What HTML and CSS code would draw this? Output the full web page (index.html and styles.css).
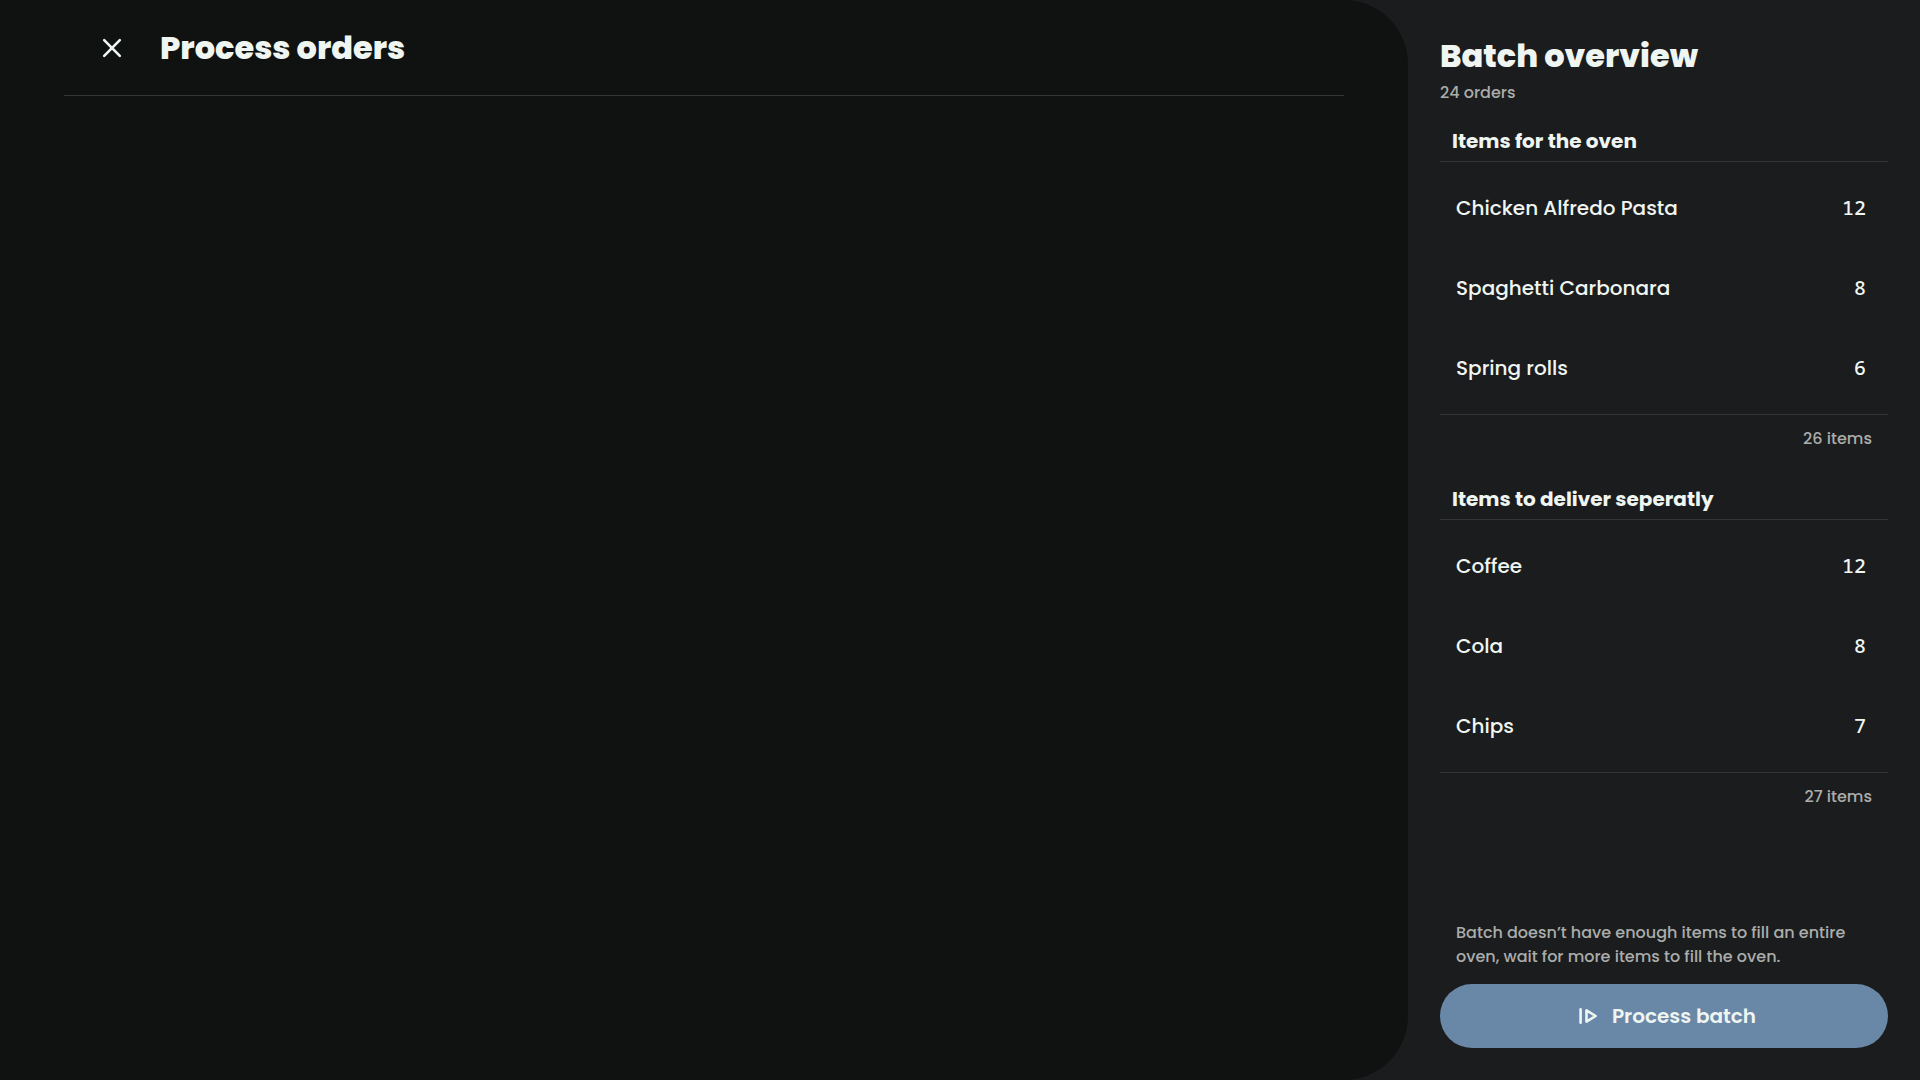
FILE: index.html
```html
<!DOCTYPE html>
<html lang="en">
<head>
  <meta charset="UTF-8">
  <meta name="viewport" content="width=device-width, initial-scale=1.0">
  <title>Process orders</title>
  <link rel="stylesheet" href="styles.css">
</head>
<body>
  <div class="layout">
    <main class="content">
      <header class="top-bar">
        <button class="close-btn" type="button" aria-label="Close">
          <svg width="32" height="32" viewBox="0 0 32 32" fill="none" stroke="currentColor" stroke-width="2.6" stroke-linecap="round">
            <path d="M8.2 8.2l15.6 15.6M23.8 8.2L8.2 23.8"/>
          </svg>
        </button>
        <h1>Process orders</h1>
      </header>
    </main>

    <aside class="sidebar">
      <h2>Batch overview</h2>
      <p class="order-count">24 orders</p>

      <div class="sections">
        <section>
          <table class="items">
            <caption>Items for the oven</caption>
            <tbody>
              <tr><td>Chicken Alfredo Pasta</td><td class="amount">12</td></tr>
              <tr><td>Spaghetti Carbonara</td><td class="amount">8</td></tr>
              <tr><td>Spring rolls</td><td class="amount">6</td></tr>
            </tbody>
          </table>
          <p class="total">26 items</p>
        </section>

        <section>
          <table class="items">
            <caption>Items to deliver seperatly</caption>
            <tbody>
              <tr><td>Coffee</td><td class="amount">12</td></tr>
              <tr><td>Cola</td><td class="amount">8</td></tr>
              <tr><td>Chips</td><td class="amount">7</td></tr>
            </tbody>
          </table>
          <p class="total">27 items</p>
        </section>
      </div>

      <div class="actions">
        <p class="note">Batch doesn’t have enough items to fill an entire oven, wait for more items to fill the oven.</p>
        <button class="process-btn" type="button">
          <svg width="32" height="32" viewBox="0 0 32 32" fill="none" stroke="currentColor" stroke-width="2.6" stroke-linecap="round" stroke-linejoin="round">
            <path d="M8.6 9.3v13.4"/>
            <path d="M14.5 10.4v11.2l9.2-5.6z"/>
          </svg>
          Process batch
        </button>
      </div>
    </aside>
  </div>
</body>
</html>
```
FILE: styles.css
```css
* {
  box-sizing: border-box;
  margin: 0;
  padding: 0;
}

body {
  font-family: Poppins, Inter, sans-serif;
  font-size: 20px;
  line-height: 30px;
  font-weight: 500;
  background: #1b1c1e;
  color: #eff5f1;
}

button {
  border: none;
  font: inherit;
  color: inherit;
  cursor: pointer;
}

.layout {
  display: flex;
  min-height: 100vh;
}

.content {
  flex: 1;
  padding: 0 64px;
  background: #101211;
  border-radius: 0 64px 64px 0;
}

.top-bar {
  display: flex;
  align-items: center;
  gap: 32px;
  height: 96px;
  padding-left: 32px;
  border-bottom: 1px solid #333535;
}

h1,
h2 {
  font-size: 32px;
  line-height: 48px;
  font-weight: 800;
}

.close-btn {
  display: flex;
  background: none;
}

.sidebar {
  display: flex;
  flex-direction: column;
  width: 512px;
  padding: 32px;
}

.order-count,
.total,
.note {
  font-size: 16px;
  line-height: 24px;
  color: #aaadab;
}

.order-count {
  padding-top: 1px;
}

.sections {
  display: flex;
  flex-direction: column;
  gap: 17px;
  margin-top: 15px;
}

.items {
  width: 100%;
  padding: 6px 0;
  border-top: 1px solid #333535;
  border-bottom: 1px solid #333535;
  border-spacing: 0;
}

.items caption {
  padding: 6px 12px 5px;
  font-weight: 700;
  text-align: left;
}

.items td {
  height: 80px;
  padding: 0 16px;
}

.items .amount {
  padding-right: 22px;
  font-family: "Noto Sans Mono", "DejaVu Sans Mono", monospace;
  text-align: right;
}

.total {
  padding: 12px 16px 10px;
  text-align: right;
}

.actions {
  margin-top: auto;
}

.note {
  padding: 0 16px;
  margin-bottom: 15px;
}

.process-btn {
  display: flex;
  align-items: center;
  justify-content: center;
  gap: 8px;
  width: 100%;
  height: 64px;
  border-radius: 32px;
  background: #6988a8;
  font-weight: 600;
}
```
